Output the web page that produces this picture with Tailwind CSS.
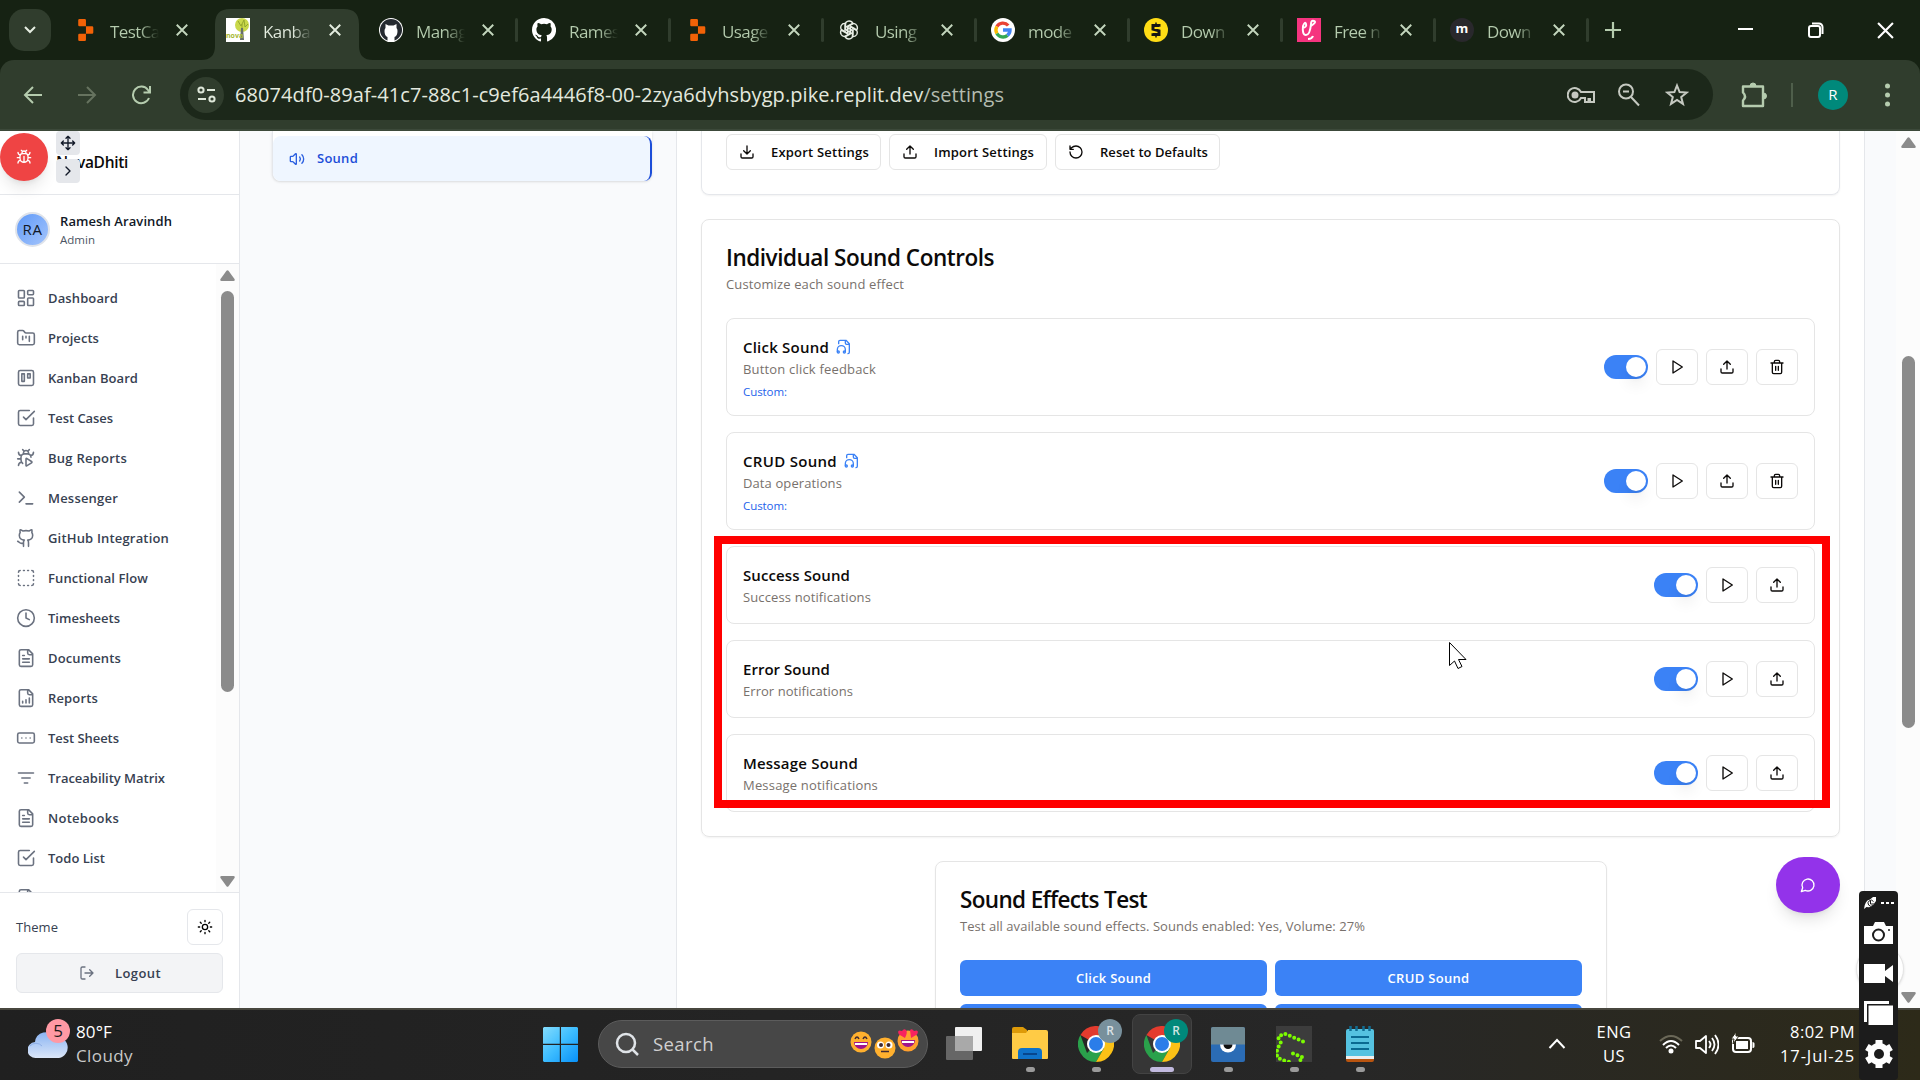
<!DOCTYPE html>
<html lang="en">
<head>
<meta charset="utf-8">
<title>Kanban - Settings</title>
<script src="https://cdn.jsdelivr.net/npm/@tailwindcss/browser@4"></script>
</head>
<body class="relative flex h-[1080px] w-[1920px] flex-col overflow-hidden bg-white font-['Segoe_UI','Open_Sans',sans-serif] whitespace-nowrap">

<svg class="hidden">
  <symbol id="dashboard" viewBox="0 0 24 24"><rect width="7" height="9" x="3" y="3" rx="1"/><rect width="7" height="5" x="14" y="3" rx="1"/><rect width="7" height="9" x="14" y="12" rx="1"/><rect width="7" height="5" x="3" y="16" rx="1"/></symbol>
  <symbol id="folder" viewBox="0 0 24 24"><path d="M4 20h16a2 2 0 0 0 2-2V8a2 2 0 0 0-2-2h-7.93a2 2 0 0 1-1.66-.9l-.82-1.2A2 2 0 0 0 7.93 3H4a2 2 0 0 0-2 2v13c0 1.1.9 2 2 2ZM8 10v4M12 10v2M16 10v6"/></symbol>
  <symbol id="kanban" viewBox="0 0 24 24"><rect width="18" height="18" x="3" y="3" rx="2"/><rect width="3" height="9" x="7" y="7"/><rect width="3" height="5" x="14" y="7"/></symbol>
  <symbol id="check" viewBox="0 0 24 24"><path d="m9 11 3 3L22 4M21 12v7a2 2 0 0 1-2 2H5a2 2 0 0 1-2-2V5a2 2 0 0 1 2-2h11"/></symbol>
  <symbol id="bugplay" viewBox="0 0 24 24"><path d="M12.765 21.522a.5.5 0 0 1-.765-.424v-8.196a.5.5 0 0 1 .765-.424l5.878 3.674a1 1 0 0 1 0 1.696zM14.12 3.88 16 2M18 11a4 4 0 0 0-4-4h-4a4 4 0 0 0-4 4v3a6.1 6.1 0 0 0 2 4.5M20.97 5c0 2.1-1.6 3.8-3.5 4M3 21c0-2.1 1.7-3.9 3.8-4M6 13H2M6.53 9C4.6 8.8 3 7.1 3 5M8 2l1.88 1.88M9 7.13v-1a3.003 3.003 0 1 1 6 0v1"/></symbol>
  <symbol id="terminal" viewBox="0 0 24 24"><path d="m4 17 6-6-6-6M12 19h8"/></symbol>
  <symbol id="github" viewBox="0 0 24 24"><path d="M15 22v-4a4.800 4.800 0 0 0-1-3.500c3 0 6-2 6-5.500.08-1.250-.27-2.480-1-3.500.28-1.150.28-2.350 0-3.500 0 0-1 0-3 1.500-2.640-.5-5.360-.5-8 0C6 2 5 2 5 2c-.3 1.150-.3 2.350 0 3.500A5.403 5.403 0 0 0 4 9c0 3.500 3 5.500 6 5.500-.39.49-.68 1.050-.85 1.650-.17.6-.22 1.230-.15 1.850v4M9 18c-4.510 2-5-2-7-2"/></symbol>
  <symbol id="dashed" viewBox="0 0 24 24"><path d="M5 3a2 2 0 0 0-2 2M19 3a2 2 0 0 1 2 2M21 19a2 2 0 0 1-2 2M5 21a2 2 0 0 1-2-2M9 3h1M9 21h1M14 3h1M14 21h1M3 9v1M21 9v1M3 14v1M21 14v1"/></symbol>
  <symbol id="clock" viewBox="0 0 24 24"><circle cx="12" cy="12" r="10"/><path d="M12 6v6l4 2"/></symbol>
  <symbol id="file" viewBox="0 0 24 24"><path d="M15 2H6a2 2 0 0 0-2 2v16a2 2 0 0 0 2 2h12a2 2 0 0 0 2-2V7ZM14 2v4a2 2 0 0 0 2 2h4M10 9H8M16 13H8M16 17H8"/></symbol>
  <symbol id="report" viewBox="0 0 24 24"><path d="M15 2H6a2 2 0 0 0-2 2v16a2 2 0 0 0 2 2h12a2 2 0 0 0 2-2V7ZM14 2v4a2 2 0 0 0 2 2h4M8 18v-2M12 18v-4M16 18v-6"/></symbol>
  <symbol id="ellipsis" viewBox="0 0 24 24"><rect width="20" height="12" x="2" y="6" rx="2"/><path d="M12 12h.01M17 12h.01M7 12h.01"/></symbol>
  <symbol id="filter" viewBox="0 0 24 24"><path d="M3 6h18M7 12h10M10 18h4"/></symbol>
  <symbol id="sun" viewBox="0 0 24 24"><circle cx="12" cy="12" r="4"/><path d="M12 2v2M12 20v2M4.930 4.930l1.410 1.410M17.660 17.660l1.410 1.410M2 12h2M20 12h2M6.340 17.660l-1.410 1.410M19.070 4.930l-1.410 1.410"/></symbol>
  <symbol id="logout" viewBox="0 0 24 24"><path d="M9 21H5a2 2 0 0 1-2-2V5a2 2 0 0 1 2-2h4M16 17l5-5-5-5M21 12H9"/></symbol>
  <symbol id="download" viewBox="0 0 24 24"><path d="M21 15v4a2 2 0 0 1-2 2H5a2 2 0 0 1-2-2v-4M7 10l5 5 5-5M12 15V3"/></symbol>
  <symbol id="upload" viewBox="0 0 24 24"><path d="M21 15v4a2 2 0 0 1-2 2H5a2 2 0 0 1-2-2v-4M17 8l-5-5-5 5M12 3v12"/></symbol>
  <symbol id="reset" viewBox="0 0 24 24"><path d="M3 12a9 9 0 1 0 9-9 9.750 9.750 0 0 0-6.740 2.740L3 8M3 3v5h5"/></symbol>
  <symbol id="play" viewBox="0 0 24 24"><path d="m6 3 14 9-14 9z"/></symbol>
  <symbol id="trash" viewBox="0 0 24 24"><path d="M3 6h18M19 6v14c0 1-1 2-2 2H7c-1 0-2-1-2-2V6M8 6V4c0-1 1-2 2-2h4c1 0 2 1 2 2v2M10 11v6M14 11v6"/></symbol>
  <symbol id="volume" viewBox="0 0 24 24"><path d="M11 4.702a.705.705 0 0 0-1.203-.498L6.413 7.587A1.400 1.400 0 0 1 5.416 8H3a1 1 0 0 0-1 1v6a1 1 0 0 0 1 1h2.416a1.400 1.400 0 0 1 .997.413l3.383 3.384A.705.705 0 0 0 11 19.298zM16 9a5 5 0 0 1 0 6M19.364 18.364a9 9 0 0 0 0-12.728"/></symbol>
  <symbol id="audio" viewBox="0 0 24 24"><path d="M4 7V4a2 2 0 0 1 2-2h9l5 5v13a2 2 0 0 1-2 2M14 2v4a2 2 0 0 0 2 2h4M2 19v-3a6 6 0 0 1 12 0v3"/><circle cx="3.500" cy="19.500" r="1.500"/><circle cx="12.500" cy="19.500" r="1.500"/></symbol>
  <symbol id="bug" viewBox="0 0 24 24"><path d="m8 2 1.880 1.880M14.120 3.880 16 2M9 7.130v-1a3.003 3.003 0 1 1 6 0v1M12 20c-3.300 0-6-2.700-6-6v-3a4 4 0 0 1 4-4h4a4 4 0 0 1 4 4v3c0 3.300-2.700 6-6 6M12 20v-9M6.530 9C4.600 8.800 3 7.100 3 5M6 13H2M3 21c0-2.100 1.700-3.900 3.800-4M20.970 5c0 2.100-1.600 3.800-3.500 4M22 13h-4M17.200 17c2.100.1 3.800 1.900 3.800 4"/></symbol>
  <symbol id="move" viewBox="0 0 24 24"><path d="m5 9-3 3 3 3M9 5l3-3 3 3M15 19l-3 3-3-3M19 9l3 3-3 3M2 12h20M12 2v20"/></symbol>
  <symbol id="chevron" viewBox="0 0 24 24"><path d="m9 18 6-6-6-6"/></symbol>
  <symbol id="message" viewBox="0 0 24 24"><path d="M7.900 20A9 9 0 1 0 4 16.100L2 22Z"/></symbol>
  <symbol id="x" viewBox="0 0 24 24"><path d="m5 5 14 14M19 5 5 19"/></symbol>
  <symbol id="octo" viewBox="0 0 16 16"><path d="M8 0C3.580 0 0 3.580 0 8c0 3.540 2.290 6.530 5.470 7.590.4.070.55-.17.55-.38v-1.490c-2.010.37-2.530-.49-2.690-.94-.09-.23-.48-.94-.82-1.130-.28-.15-.68-.52-.01-.53.63-.01 1.080.58 1.230.82.72 1.210 1.870.87 2.330.66.07-.52.28-.87.51-1.070-1.780-.2-3.640-.89-3.640-3.950 0-.87.31-1.590.82-2.150-.08-.2-.36-1.020.08-2.120 0 0 .67-.21 2.200.82a7.600 7.600 0 0 1 4 0c1.530-1.040 2.200-.82 2.200-.82.44 1.100.16 1.920.08 2.120.51.56.82 1.270.82 2.150 0 3.070-1.870 3.750-3.650 3.950.29.25.54.73.54 1.480v2.200c0 .21.15.46.55.38A8 8 0 0 0 8 0"/></symbol>
  <symbol id="replit" viewBox="0 0 24 27"><path fill="#f26207" d="M1.500 0h6.500a1.500 1.500 0 0 1 1.500 1.500V9H1.500A1.500 1.500 0 0 1 0 7.500v-6A1.500 1.500 0 0 1 1.500 0M9.500 9h7.500a1.500 1.500 0 0 1 1.500 1.500v6A1.500 1.500 0 0 1 17 18H9.500zM0 19.500A1.500 1.500 0 0 1 1.500 18h8v7.500A1.500 1.500 0 0 1 8 27H1.500A1.500 1.500 0 0 1 0 25.500z"/></symbol>
  <symbol id="chrome" viewBox="0 0 36 36"><path fill="#e33b2e" d="M18 18 2.400 9A18 18 0 0 1 33.600 9z"/><path fill="#2aa14b" d="M18 18l-9 9L2.400 9A18 18 0 0 0 18 36l8-14z"/><path fill="#fbc116" d="M18 9h15.600A18 18 0 0 1 18 36l8-14z"/><circle cx="18" cy="18" r="9" fill="#fff"/><circle cx="18" cy="18" r="7" fill="#2b7de9"/></symbol>
</svg>

<!-- Tab strip -->
<header class="flex h-[60px] shrink-0 items-center bg-[#162213] text-[#b5ccae]">
  <div class="ml-[9px] flex size-[42px] items-center justify-center rounded-[15px] bg-[#303d2d]">
    <svg class="size-4 fill-none stroke-[#e6eee2] stroke-2" viewBox="0 0 16 16"><path d="m3 5 5 5 5-5"/></svg>
  </div>
  <div id="tabs" class="ml-[11px] flex h-full"></div>
  <svg class="ml-[11px] size-5 fill-none stroke-[#b5ccae] stroke-[2.2]" viewBox="0 0 20 20"><path d="M10 2v16M2 10h16"/></svg>
  <div class="ml-auto flex items-center gap-[53px] pr-[26px] stroke-white stroke-2 fill-none">
    <svg class="h-4 w-[17px]" viewBox="0 0 17 16"><path d="M1 7h15"/></svg>
    <svg class="ml-[1px] size-4" viewBox="0 0 16 16"><rect x="1" y="4" width="11" height="11" rx="2"/><path d="M4 1.500h7a3.500 3.500 0 0 1 3.500 3.500v7"/></svg>
    <svg class="size-[17px]" viewBox="0 0 16 16"><path d="m1 1 14 14M15 1 1 15"/></svg>
  </div>
</header>

<!-- Toolbar -->
<div class="bg-[#162213]">
<div class="flex h-[71px] items-center rounded-t-[14px] border-b-2 border-[#3c493a] bg-[#303d2d] text-[#b5ccae]">
  <svg class="ml-[23px] size-5 fill-none stroke-[#b5ccae] stroke-2" viewBox="0 0 20 20"><path d="M19 10H2M10 2l-8 8 8 8"/></svg>
  <svg class="ml-[34px] size-5 fill-none stroke-[#66735f] stroke-2" viewBox="0 0 20 20"><path d="M1 10h17M10 2l8 8-8 8"/></svg>
  <svg class="ml-[34px] size-5 fill-none stroke-[#b5ccae] stroke-2" viewBox="0 0 20 20"><path d="M18 13a8.300 8.300 0 1 1-1-8l1.500 2M19 1v6.500h-6.500"/></svg>
  <div class="ml-[29px] flex h-[51px] w-[1533px] items-center rounded-full bg-[#1c281a] pr-[24px] pl-[8px]">
    <div class="flex size-9 items-center justify-center rounded-full bg-[#303d2d]">
      <svg class="size-[19px] fill-none stroke-[#dfe8da] stroke-2" viewBox="0 0 19 19"><circle cx="4" cy="5" r="2.600"/><path d="M10 5h8M1 14h8"/><circle cx="15" cy="14" r="2.600"/></svg>
    </div>
    <div class="ml-[11px] text-[20px] leading-[28px] text-[#e3e9df]"><span data-w="769">68074df0-89af-41c7-88c1-c9ef6a4446f8-00-2zya6dyhsbygp.pike.replit.dev<span class="text-[#b4bcb0]">/settings</span></span></div>
    <div class="ml-auto flex items-center gap-[23px] fill-none stroke-[#c5c9c1] stroke-2">
      <svg class="w-7 h-5" viewBox="0 0 28 20"><path d="M14 7a7 7 0 1 0 0 6h4v4h3.500v-3H23v3h4V7z"/><circle cx="8" cy="10" r="2.500" class="fill-[#c5c9c1]"/></svg>
      <svg class="-ml-[1px] mr-[1px] size-6" viewBox="0 0 24 24"><circle cx="9" cy="8.500" r="7"/><path d="m14 14 8 8.500M6 8.500h6"/></svg>
      <svg class="size-6" viewBox="0 0 24 24"><path d="m12 2.500 2.600 6.600 7.100.4-5.500 4.500 1.800 6.900-6-3.900-6 3.900 1.800-6.900L2.300 9.500l7.100-.4z"/></svg>
    </div>
  </div>
  <svg class="ml-[28px] size-[26px] fill-none stroke-[#b5ccae] stroke-[2.4]" viewBox="0 0 26 26"><path d="M2 4.500h20V24H2v-5.500q4-4 0-8z" stroke-linejoin="round"/><path d="M9 4a3 3 0 0 1 6 0zM22.500 11a3 3 0 0 1 0 6z" class="fill-[#b5ccae] stroke-1"/></svg>
  <div class="ml-[24px] h-6 w-[2px] bg-[#4f5f4b]"></div>
  <div class="ml-[25px] flex size-[30px] items-center justify-center rounded-full bg-[#00897b] text-[15px] text-white">R</div>
  <svg class="ml-[37px] h-7 w-[5px] fill-[#b5ccae]" viewBox="0 0 5 28"><circle cx="2.500" cy="5" r="2.500"/><circle cx="2.500" cy="14" r="2.500"/><circle cx="2.500" cy="23" r="2.500"/></svg>
</div>
</div>

<!-- Page -->
<div class="flex h-[877px] shrink-0 overflow-hidden bg-[#f9fafc] text-[#0c0a09]">
  <aside class="relative flex w-[240px] shrink-0 flex-col border-r border-[#e5e7eb] bg-white">
    <div class="flex h-[64px] items-center border-b border-[#e5e7eb] pt-px pl-[56px]"><span data-w="72" class="text-[15.500px] font-semibold">NovaDhiti</span></div>
    <div class="flex h-[69px] items-center border-b border-[#e5e7eb] pl-[15px]">
      <div class="flex size-[35px] items-center justify-center rounded-full border-2 border-[#dfe3ea] bg-linear-to-br from-[#609af8] to-[#a4c4fb] text-[15px] text-[#111827]"><span data-w="20">RA</span></div>
      <div class="ml-[10px] flex flex-col">
        <span class="text-[13px] leading-5 font-semibold text-[#111827]"><span data-w="112">Ramesh Aravindh</span></span>
        <span class="pt-px text-[11.500px] leading-4 text-[#4b5563]"><span data-w="35">Admin</span></span>
      </div>
    </div>
    <div class="flex h-[628px] overflow-hidden">
      <nav id="nav" class="flex w-[216px] flex-col pt-[14px]"></nav>
      <div class="flex w-[23px] flex-col items-center bg-[#fcfcfc] pt-[6px]">
        <svg class="h-[11px] w-[15px] shrink-0 fill-[#8b8b8b]" viewBox="0 0 15 11"><path d="M6.500.8q1-1.200 2 0l6 8.200q.8 2-1 2h-12q-1.800 0-1-2z"/></svg>
        <div class="mt-[10px] h-[401px] w-[13px] shrink-0 rounded-full bg-[#8b8b8b]"></div>
        <svg class="mt-[184px] h-[11px] w-[15px] shrink-0 rotate-180 fill-[#8b8b8b]" viewBox="0 0 15 11"><path d="M6.500.8q1-1.200 2 0l6 8.200q.8 2-1 2h-12q-1.800 0-1-2z"/></svg>
      </div>
    </div>
    <div class="flex flex-1 flex-col gap-2 border-t border-[#e5e7eb] px-4 pt-4">
      <div class="flex h-9 items-center justify-between">
        <span class="pt-px text-[13px] text-[#374151]"><span data-w="42">Theme</span></span>
        <div class="flex h-9 w-9 items-center justify-center rounded-md border border-[#e5e7eb]"><svg class="size-4 fill-none stroke-black stroke-2 [stroke-linecap:round]"><use href="#sun"/></svg></div>
      </div>
      <div class="flex h-10 items-center rounded-md border border-[#e5e7eb] bg-[#f3f4f6] pl-[62px] text-[13px] font-semibold text-[#374151]">
        <svg class="size-4 fill-none stroke-[#6b7280] stroke-2 [stroke-linecap:round] [stroke-linejoin:round]"><use href="#logout"/></svg>
        <span data-w="46" class="ml-[20px] pt-px">Logout</span>
      </div>
    </div>
    <!-- floating bug reporter -->
    <div class="absolute top-[2px] left-0 flex size-12 items-center justify-center rounded-full bg-[#ef4444] shadow-lg"><svg class="size-4 fill-none stroke-white stroke-2 [stroke-linecap:round]"><use href="#bug"/></svg></div>
    <div class="absolute top-0 left-[56px] flex flex-col gap-1">
      <div class="flex size-6 items-center justify-center rounded-sm bg-[#e5e7eb]"><svg class="size-4 fill-none stroke-[#111827] stroke-2 [stroke-linecap:round] [stroke-linejoin:round]"><use href="#move"/></svg></div>
      <div class="flex size-6 items-center justify-center rounded-sm bg-[#e5e7eb]"><svg class="size-4 fill-none stroke-[#111827] stroke-2 [stroke-linecap:round] [stroke-linejoin:round]"><use href="#chevron"/></svg></div>
    </div>
  </aside>

  <!-- Settings sections -->
  <div class="w-[436px] shrink-0 pl-[32px]">
    <div class="h-[50px] w-[380px] rounded-b-lg border-l border-[#e5e7eb] bg-white pt-[5px] shadow-sm">
      <div class="flex h-[45px] items-center rounded-lg border-r-2 border-[#1d4ed8] bg-[#eff6ff] pl-4 text-[#1d4ed8]">
        <svg class="size-4 fill-none stroke-[#2b5fe0] stroke-2 [stroke-linecap:round] [stroke-linejoin:round]"><use href="#volume"/></svg>
        <span data-w="41" class="ml-3 text-[13px] font-semibold">Sound</span>
      </div>
    </div>
  </div>

  <!-- Sound panel -->
  <main class="flex w-[1189px] shrink-0 flex-col border-x border-[#e5e7eb] bg-white px-[24px]">
    <section class="h-[64px] w-[1139px] shrink-0 rounded-b-lg border-x border-b border-[#e5e7eb] pt-[3px] pl-[24px] shadow-xs">
      <div class="flex gap-2 text-[13px] font-semibold">
        <div class="flex h-9 w-[155px] items-center rounded-md border border-[#e5e5e5] pl-3"><svg class="size-4 fill-none stroke-[#0c0a09] stroke-2 [stroke-linecap:round] [stroke-linejoin:round]"><use href="#download"/></svg><span data-w="98" class="ml-[16px] pt-px">Export Settings</span></div>
        <div class="flex h-9 w-[158px] items-center rounded-md border border-[#e5e5e5] pl-3"><svg class="size-4 fill-none stroke-[#0c0a09] stroke-2 [stroke-linecap:round] [stroke-linejoin:round]"><use href="#upload"/></svg><span data-w="100" class="ml-[16px] pt-px">Import Settings</span></div>
        <div class="flex h-9 w-[165px] items-center rounded-md border border-[#e5e5e5] pl-3"><svg class="size-4 fill-none stroke-[#0c0a09] stroke-2 [stroke-linecap:round] [stroke-linejoin:round]"><use href="#reset"/></svg><span data-w="108" class="ml-[16px] pt-px">Reset to Defaults</span></div>
      </div>
    </section>

    <section class="mt-6 flex h-[618px] w-[1139px] shrink-0 flex-col rounded-lg border border-[#e5e5e5] px-[24px] pt-6 shadow-xs">
      <h2 class="h-6 pt-px text-[22.500px] leading-[26px] font-semibold"><span data-w="268">Individual Sound Controls</span></h2>
      <p class="mt-[6px] text-[13px] leading-5 text-[#78716c]"><span data-w="178">Customize each sound effect</span></p>
      <div id="rows" class="mt-6 flex flex-col gap-4"></div>
    </section>

    <section class="mt-6 ml-[234px] h-[240px] w-[672px] shrink-0 rounded-lg border border-[#e5e5e5] px-6 pt-6 shadow-xs">
      <h2 class="h-6 pt-px text-[22.500px] leading-[26px] font-semibold"><span data-w="187">Sound Effects Test</span></h2>
      <p class="mt-[6px] text-[13px] leading-5 text-[#78716c]"><span data-w="405">Test all available sound effects. Sounds enabled: Yes, Volume: 27%</span></p>
      <div class="mt-6 grid grid-cols-2 gap-2 text-[13px] font-semibold text-white">
        <div class="flex h-9 items-center justify-center rounded-md bg-[#3b82f6] pt-px"><span data-w="75">Click Sound</span></div>
        <div class="flex h-9 items-center justify-center rounded-md bg-[#3b82f6] pt-px"><span data-w="82">CRUD Sound</span></div>
        <div class="h-9 rounded-md bg-[#3b82f6]"></div>
        <div class="h-9 rounded-md bg-[#3b82f6]"></div>
      </div>
    </section>
  </main>

  <div class="ml-auto flex w-6 shrink-0 flex-col items-center bg-[#fcfcfc] pt-[6px]">
    <svg class="h-[11px] w-[15px] shrink-0 fill-[#8b8b8b]" viewBox="0 0 15 11"><path d="M6.500.8q1-1.200 2 0l6 8.200q.8 2-1 2h-12q-1.800 0-1-2z"/></svg>
    <div class="mt-[208px] h-[372px] w-[13px] shrink-0 rounded-full bg-[#8b8b8b]"></div>
    <svg class="mt-[264px] h-[11px] w-[15px] shrink-0 rotate-180 fill-[#8b8b8b]" viewBox="0 0 15 11"><path d="M6.500.8q1-1.200 2 0l6 8.200q.8 2-1 2h-12q-1.800 0-1-2z"/></svg>
  </div>
</div>

<!-- Taskbar -->
<footer class="flex h-[72px] shrink-0 items-center border-t-2 border-[#48473f] bg-linear-to-r from-[#202020] via-[#272727] via-70% to-[#2d2a19] pb-[2px] text-white">
  <div class="flex w-[543px] items-center pl-[28px]">
    <svg class="-mt-3 h-[46px] w-[42px]" viewBox="0 0 42 46">
      <defs><linearGradient id="cloud" x2="0" y2="1"><stop stop-color="#8ab4f3"/><stop offset="1" stop-color="#dbe6f8"/></linearGradient></defs>
      <path fill="url(#cloud)" d="M8 43a8 8 0 0 1-1-16 11 11 0 0 1 20-5 9 9 0 0 1 4 21z"/><path d="M2 31a8 8 0 0 1 12 0" class="fill-none stroke-[#8fb0e8]"/>
      <circle cx="30" cy="16" r="12" fill="#ff99a4"/><text x="30" y="22" text-anchor="middle" class="fill-[#1a1a1a] text-[17px]">5</text>
    </svg>
    <div class="ml-[6px] flex flex-col text-[17px] leading-6"><span data-w="36" class="self-start">80°F</span><span data-w="57" class="self-start text-[#c9c9c9]">Cloudy</span></div>
  </div>
  <svg class="size-[35px] shrink-0" viewBox="0 0 35 35"><defs><linearGradient id="win" x2="1" y2="1"><stop stop-color="#84dcfc"/><stop offset=".5" stop-color="#3cbcff"/><stop offset="1" stop-color="#0890f8"/></linearGradient></defs><path fill="url(#win)" d="M1 0h15.800v16.800H0V1zM18 0h16l1 1v15.800H18zM0 18h16.800v17H1l-1-1zM18 18h17v16l-1 1H18z"/></svg>
  <div class="ml-[20px] flex h-12 w-[330px] shrink-0 items-center rounded-full border border-[#5c5c5c] bg-[#474747] pl-[16px]">
    <svg class="size-[24px] fill-none stroke-[#e0e4e8] stroke-[2.5]" viewBox="0 0 24 24"><circle cx="11" cy="11" r="9"/><path d="m17.500 17.500 5.500 5.500"/></svg>
    <span data-w="61" class="ml-[14px] text-[18.500px] text-[#d0d0d0]">Search</span>
    <svg class="ml-[135px] h-8 w-[70px]" viewBox="0 0 70 32">
      <circle cx="12" cy="14" r="10.500" fill="#ffb02e"/><path d="M5 14h14a7 7 0 0 1-14 0" fill="#a0148c"/><path d="M6 15h12v2H6z" fill="#fff"/><path d="M6 11q2-4 4 0M14 11q2-4 4 0" class="fill-none stroke-[#402a32] stroke-[1.5]"/>
      <circle cx="36" cy="20" r="10.500" fill="#ffb02e"/><circle cx="31.500" cy="17" r="3.500" fill="#fff"/><circle cx="40" cy="17" r="3.500" fill="#fff"/><circle cx="32" cy="17" r="2" fill="#402a32"/><circle cx="39.500" cy="17" r="2" fill="#402a32"/><path d="M32 23.500h8" class="stroke-[#402a32] stroke-[1.500]"/>
      <circle cx="59" cy="13" r="10.500" fill="#ffa02e"/><path d="M52 12h14a7 7 0 0 1-14 0" fill="#a0148c"/><path d="M53 13h12v2H53z" fill="#fff"/><path d="M56 10 50 6.500Q48 3 50.500 2.500L53 3q2-3 4-1t-1 8M62 10l-1-8q2-2 4 1l2.500-.5q2.500.500.500 4z" fill="#f8225f"/>
    </svg>
  </div>
  <svg class="ml-[18px] h-[36px] w-[36px]" viewBox="0 0 36 36"><rect x="9" y="1" width="27" height="24" rx="1" fill="#f0f0f0"/><rect y="10" width="27" height="24" rx="1" fill="#666"/><path d="M9 10h18v15H9z" fill="#a9a9a9"/></svg>

  <div class="ml-[18px] flex gap-[6px]">
    <div class="relative flex size-[60px] items-center justify-center">
      <svg class="size-9" viewBox="0 0 36 36"><path d="M0 3q0-2 2-2h9l4 3v4H0z" fill="#dd9a08"/><path d="M0 7h14l2-3h18q2 0 2 2v26q0 1-1 1H1q-1 0-1-1z" fill="#ffcb45"/><path d="M6 33v-7q0-4 4-4h16q4 0 4 4v7z" fill="#0f72c8"/><path d="M11 28h14" class="stroke-[#07468c] stroke-2"/></svg>
      <div class="absolute bottom-[2px] h-[5px] w-[9px] rounded-full bg-[#9a9a9a]"></div>
    </div>
    <div class="relative flex size-[60px] items-center justify-center">
      <svg class="size-9"><use href="#chrome"/></svg>
      <div class="absolute top-[5px] right-[4px] flex size-6 items-center justify-center rounded-full bg-[#78909c] text-[12px] font-semibold text-[#dbe2e6]">R</div>
      <div class="absolute bottom-[2px] h-[5px] w-[9px] rounded-full bg-[#9a9a9a]"></div>
    </div>
    <div class="relative flex size-[60px] items-center justify-center rounded-lg border border-[#434343] bg-[#363636]">
      <svg class="size-9"><use href="#chrome"/></svg>
      <div class="absolute top-[4px] right-[3px] flex size-6 items-center justify-center rounded-full bg-[#00897b] text-[12px] font-semibold text-[#cfe6e3]">R</div>
      <div class="absolute bottom-px h-[5px] w-6 rounded-full bg-[#c2badf]"></div>
    </div>
    <div class="relative flex size-[60px] items-center justify-center">
      <svg class="h-[35px] w-[36px]" viewBox="0 0 36 35"><rect x="1" width="34" height="35" rx="2" fill="#2b6cb5"/><path d="M1 17.500V2q0-2 2-2h30q2 0 2 2v15.500z" fill="#6f8a94"/><path d="M10 17.500h16a8 8 0 0 1-16 0" fill="#fff"/><path d="M13.500 17.500h9a4.500 4.500 0 0 1-9 0" fill="#111"/></svg>
      <div class="absolute bottom-[2px] h-[5px] w-[9px] rounded-full bg-[#9a9a9a]"></div>
    </div>
    <div class="relative flex size-[60px] items-center justify-center">
      <svg class="size-9" viewBox="0 0 36 36"><path d="M0 0h36v36H0z" fill="#3c3c3c"/><path d="M27 15.500 8.500 7.500 2 11l3 6-4 6 0 8 5 3 8 2M17 27.500l10 4-3 3-4 0" class="fill-none stroke-[#7cfc00] stroke-[4] [stroke-dasharray:0_4.800] [stroke-linecap:round]"/></svg>
      <div class="absolute bottom-[2px] h-[5px] w-[9px] rounded-full bg-[#9a9a9a]"></div>
    </div>
    <div class="relative flex size-[60px] items-center justify-center">
      <svg class="h-9 w-[28px]" viewBox="0 0 28 36"><path d="M0 32h28v2q0 2-2 2H2q-2 0-2-2z" fill="#b9540f"/><path d="M0 28h28v5H0z" fill="#eee"/><path d="M0 5q0-2 2-2h24q2 0 2 2v25H0z" fill="#55c2e0"/><path d="M5 11h18M5 17h18M5 23h18" class="stroke-[#0a6a92] stroke-2"/><path d="M4.500 0v5M10.500 0v5M17.500 0v5M23.500 0v5" class="stroke-[#116d93] stroke-[2.500]"/></svg>
      <div class="absolute bottom-[2px] h-[5px] w-[9px] rounded-full bg-[#9a9a9a]"></div>
    </div>
  </div>

  <div class="ml-auto flex items-center pr-[65px] text-[16.500px] leading-6">
    <svg class="h-4 w-[18px] fill-none stroke-white stroke-2" viewBox="0 0 18 16"><path d="m1.500 12 7.500-8 7.500 8"/></svg>
    <div class="ml-[30px] flex w-[36px] flex-col items-center"><span data-w="35">ENG</span><span data-w="22">US</span></div>
    <svg class="ml-[27px] h-[22px] w-6 fill-none stroke-white stroke-2" viewBox="0 0 24 22"><path d="M1 8q11-10 22 0" class="stroke-[#6b6858]"/><path d="M4 12q8-8 16 0M7 15q5-5 10 0"/><circle cx="12" cy="18" r="1.500" fill="#fff"/></svg>
    <svg class="ml-[12px] size-6 fill-none stroke-white stroke-[1.800]" viewBox="0 0 24 24"><path d="M1 9h4l6-5v17l-6-5H1zM14 9q3 3.500 0 7M17 6q5 6.500 0 13M20 3q7 9.500 0 19" stroke-linejoin="round"/></svg>
    <svg class="ml-[12px] size-6" viewBox="0 0 24 24"><rect x="2" y="6" width="18" height="14" rx="3" class="fill-none stroke-white stroke-2"/><path d="M5 9h12v8H5zM21.500 10q2 0 2 1.500v3q0 1.500-2 1.500z" fill="#fff"/><path d="M5 0 0 7h3l-1 5 6-8H5z" class="fill-white stroke-[#2b2919]"/></svg>
    <div class="ml-[25px] flex w-[75px] flex-col items-end"><span data-w="65">8:02 PM</span><span data-w="75">17-Jul-25</span></div>
  </div>
</footer>

<!-- Overlays -->
<div class="absolute top-[536px] left-[714px] h-[272px] w-[1116px] border-8 border-[#ff0000]"></div>
<svg class="absolute top-[642px] left-[1449px] h-[28px] w-[20px] fill-white stroke-black" viewBox="0 0 20 28"><path d="M.5.500v23l5-4.500 3.500 7.500 4-2-3.500-7H17z"/></svg>
<div class="absolute top-[857px] left-[1776px] flex h-14 w-16 items-center justify-center rounded-full bg-[#9333ea] shadow-lg"><svg class="size-4 fill-none stroke-white stroke-2 [stroke-linejoin:round]"><use href="#message"/></svg></div>
<div class="absolute top-[945px] left-[1856px] size-12 rounded-full border border-[#e5e5e5] bg-white shadow-sm"></div>
<div class="absolute top-[891px] left-[1859px] flex h-[189px] w-[39px] flex-col items-center rounded bg-[#1c1c1c] fill-white">
  <svg class="mt-[6px] h-3 w-[30px] shrink-0" viewBox="0 0 30 12"><path d="M0 12Q1 3 6 2.500L9 0h3v4l-1.500 2q-2 5-8 4z"/><path d="M9.500 4.500a3 3 0 1 0-.5 4M6.500 4v3h3.500" class="fill-none stroke-[#1c1c1c]"/><path d="M17 5h3v2h-3zM22 5h3v2h-3zM27 5h3v2h-3z"/></svg>
  <svg class="mt-[13px] h-[22px] w-[30px] shrink-0" viewBox="0 0 30 22"><path d="M0 4h9l2-4h9l2 4h7v18H0z"/><circle cx="14.500" cy="13" r="5.500" class="fill-white stroke-[#1c1c1c] stroke-2"/><circle cx="25" cy="8" r="1" class="fill-[#1c1c1c]"/></svg>
  <svg class="mt-[20px] h-[19px] w-[30px] shrink-0" viewBox="0 0 30 19"><path d="M0 0h21v7l8-6v17l-8-6v7H0z"/></svg>
  <svg class="mt-[18px] h-6 w-[30px] shrink-0" viewBox="0 0 30 24"><path d="M0 0h25v3H3v18H0zM4.500 4.500H29V24H4.500z"/></svg>
  <svg class="mt-[14px] size-[30px] shrink-0" viewBox="0 0 30 30"><circle cx="15" cy="15" r="8" class="fill-none stroke-white stroke-[6]"/><path d="M15 1v28M2.900 8l24.200 14M2.900 22 27.100 8" class="stroke-white stroke-[7]"/><circle cx="15" cy="15" r="5" class="fill-[#1c1c1c]"/></svg>
</div>

<script>
// Browser tabs
const favicons = {
  replit: '<svg class="ml-[5px] h-[22px] w-[20px]"><use href="#replit"/></svg>',
  nova: '<svg class="size-6" viewBox="0 0 24 24"><path d="M0 0h24v24H0z" fill="#fff"/><circle cx="16" cy="7" r="7" fill="#c9d84a"/><path d="M12 3l3 5 3-6 1 7 3-3M16 6v10" class="fill-none stroke-[#93a62d]"/><path d="M15 10h2l1 12h-4z" fill="#687069"/><text x="0" y="20" class="fill-[#a6b832] text-[7px] font-bold">nova</text></svg>',
  octoDark: '<svg class="size-6" viewBox="0 0 24 24"><circle cx="12" cy="12" r="12" fill="#fff"/><circle cx="12" cy="12" r="11" fill="#24292f"/><path d="M8.500 24v-5q-3-1-3-6 0-2 1-3l0-4 3 1.500h5l3-1.500 0 4q1 1 1 3 0 5-3 6v5z" fill="#fff"/></svg>',
  octo: '<svg class="size-6 fill-white"><use href="#octo"/></svg>',
  gpt: '<svg class="size-[22px] fill-none stroke-[#e8eee5] stroke-[1.500]" viewBox="0 0 24 24"><g id="petal"><path d="M12 2.200a4.500 4.500 0 0 1 4.300 3L10.500 8.500v6M7.600 14V6.800A4.500 4.500 0 0 1 12 2.200"/></g><use href="#petal" transform="rotate(60 12 12)"/><use href="#petal" transform="rotate(120 12 12)"/><use href="#petal" transform="rotate(180 12 12)"/><use href="#petal" transform="rotate(240 12 12)"/><use href="#petal" transform="rotate(300 12 12)"/></svg>',
  google: '<svg class="size-6 fill-none stroke-[3.400]" viewBox="0 0 24 24"><circle cx="12" cy="12" r="12" fill="#fff"/><path d="M17.200 7.500A7 7 0 0 0 5.900 8.500" stroke="#ea4335"/><path d="M5.900 8.500a7 7 0 0 0 0 7" stroke="#fbbc05"/><path d="M5.900 15.500a7 7 0 0 0 10.600 1.900" stroke="#34a853"/><path d="M16.500 17.400A7 7 0 0 0 19 12h-7" stroke="#4285f4"/></svg>',
  dollar: '<svg class="size-6" viewBox="0 0 24 24"><circle cx="12" cy="12" r="12" fill="#ffdd15"/><path d="M15 8.800V7.500h-6v3.700l6 1.600v3.700H9v-1.300" class="fill-none stroke-[#151515] stroke-[3]"/><path d="M12 4.500v3M12 16.500v3" class="stroke-[#151515] stroke-[1.500]"/></svg>',
  pink: '<svg class="size-6" viewBox="0 0 24 24"><path d="M0 0h24v24H0z" fill="#f5347f"/><path d="M6 10q4-1 3-4t-3 2q-1 9 3 9t5-11q0-4 3-3t-3 5M11 21q4 0 5-3" class="fill-none stroke-white stroke-2"/></svg>',
  m: '<div class="flex size-6 items-center justify-center rounded-full bg-[#29282c] pb-[2px] text-[13px] font-bold text-white">m</div>',
};
const tabs = [['replit','TestCa'],['nova','Kanba'],['octoDark','Manag'],['octo','Rames'],['replit','Usage'],['gpt','Using'],['google','mode'],['dollar','Down'],['pink','Free n'],['m','Down']];
document.getElementById('tabs').innerHTML = tabs.map(([icon, label], i) => `
  <div class="relative flex h-full w-[153px] items-center pl-[11px]">
    ${i === 1 ? '<svg class="absolute top-[9px] left-[-14px] h-[51px] w-[172px] fill-[#303d2d]" viewBox="0 0 172 51"><path d="M0 51q14 0 14-14V15Q14 0 29 0h114q15 0 15 15v22q0 14 14 14z"/></svg>' : ''}
    <div class="relative w-6 shrink-0">${favicons[icon]}</div>
    <div class="relative ml-[13px] w-[49px] overflow-hidden bg-linear-to-r ${i === 1 ? 'from-[#e3ecdf]' : 'from-[#b5ccae]'} from-60% to-transparent bg-clip-text pt-[4px] text-[17px] tracking-[-0.6px] text-transparent">${label}</div>
    <svg class="relative ml-[14px] size-[18px] fill-none ${i === 1 ? 'stroke-[#e3ecdf]' : 'stroke-[#c3d6bd]'} stroke-[2.500]"><use href="#x"/></svg>
    ${i > 1 ? '<div class="absolute top-[18px] left-[147px] h-6 w-[3px] rounded-full bg-[#303d2d]"></div>' : ''}
  </div>`).join('');

// Sidebar navigation: icon, label, label width
const nav = [['dashboard','Dashboard',70],['folder','Projects',51],['kanban','Kanban Board',90],['check','Test Cases',65],['bugplay','Bug Reports',79],['terminal','Messenger',70],['github','GitHub Integration',121],['dashed','Functional Flow',100],['clock','Timesheets',72],['file','Documents',73],['report','Reports',50],['ellipsis','Test Sheets',71],['filter','Traceability Matrix',117],['file','Notebooks',71],['check','Todo List',57],['file','',0]];
document.getElementById('nav').innerHTML = nav.map(([icon, label, w]) => `
  <div class="flex h-10 shrink-0 items-center pl-4">
    <svg class="size-5 fill-none stroke-[#6b7280] stroke-[1.900] [stroke-linecap:round] [stroke-linejoin:round]"><use href="#${icon}"/></svg>
    <span data-w="${w}" class="ml-3 pt-[2px] text-[13px] font-semibold text-[#374151]">${label}</span>
  </div>`).join('');

// Sound rows: title, title width, description, description width, has a custom file
const rows = [['Click Sound',86,'Button click feedback',133,true],['CRUD Sound',94,'Data operations',99,true],['Success Sound',107,'Success notifications',128,false],['Error Sound',87,'Error notifications',110,false],['Message Sound',115,'Message notifications',135,false]];
const button = (icon) => `<div class="flex h-9 w-[42px] items-center justify-center rounded-md border border-[#e5e5e5]"><svg class="size-4 fill-none stroke-[#0c0a09] stroke-2 [stroke-linecap:round] [stroke-linejoin:round]"><use href="#${icon}"/></svg></div>`;
document.getElementById('rows').innerHTML = rows.map(([title, tw, text, w, custom]) => `
  <div class="flex ${custom ? 'h-[98px]' : 'h-[78px]'} items-center rounded-lg border border-[#e5e5e5] px-4">
    <div class="flex flex-col">
      <div class="flex h-6 items-center gap-[7px] text-[15px] font-semibold"><span data-w="${tw}">${title}</span>${custom ? '<svg class="size-4 fill-none stroke-[#3b82f6] stroke-2 [stroke-linecap:round] [stroke-linejoin:round]"><use href="#audio"/></svg>' : ''}</div>
      <div class="text-[13px] leading-5 text-[#78716c]"><span data-w="${w}">${text}</span></div>
      ${custom ? '<div class="mt-[5px] -mb-px text-[11.500px] leading-4 text-[#2563eb]"><span data-w="44">Custom:</span></div>' : ''}
    </div>
    <div class="ml-auto flex items-center gap-2">
      <div class="flex h-6 w-11 items-center justify-end rounded-full bg-[#3b82f6] pr-[2px]"><div class="size-5 rounded-full bg-white shadow-lg"></div></div>
      ${button('play')}${button('upload')}${custom ? button('trash') : ''}
    </div>
  </div>`).join('');

// Track each label to its design width
document.fonts.ready.then(() => document.querySelectorAll('[data-w]').forEach((el) => {
  const n = el.textContent.length;
  if (n) el.style.letterSpacing = (+el.dataset.w - el.getBoundingClientRect().width) / n + 'px';
}));
</script>
</body>
</html>
